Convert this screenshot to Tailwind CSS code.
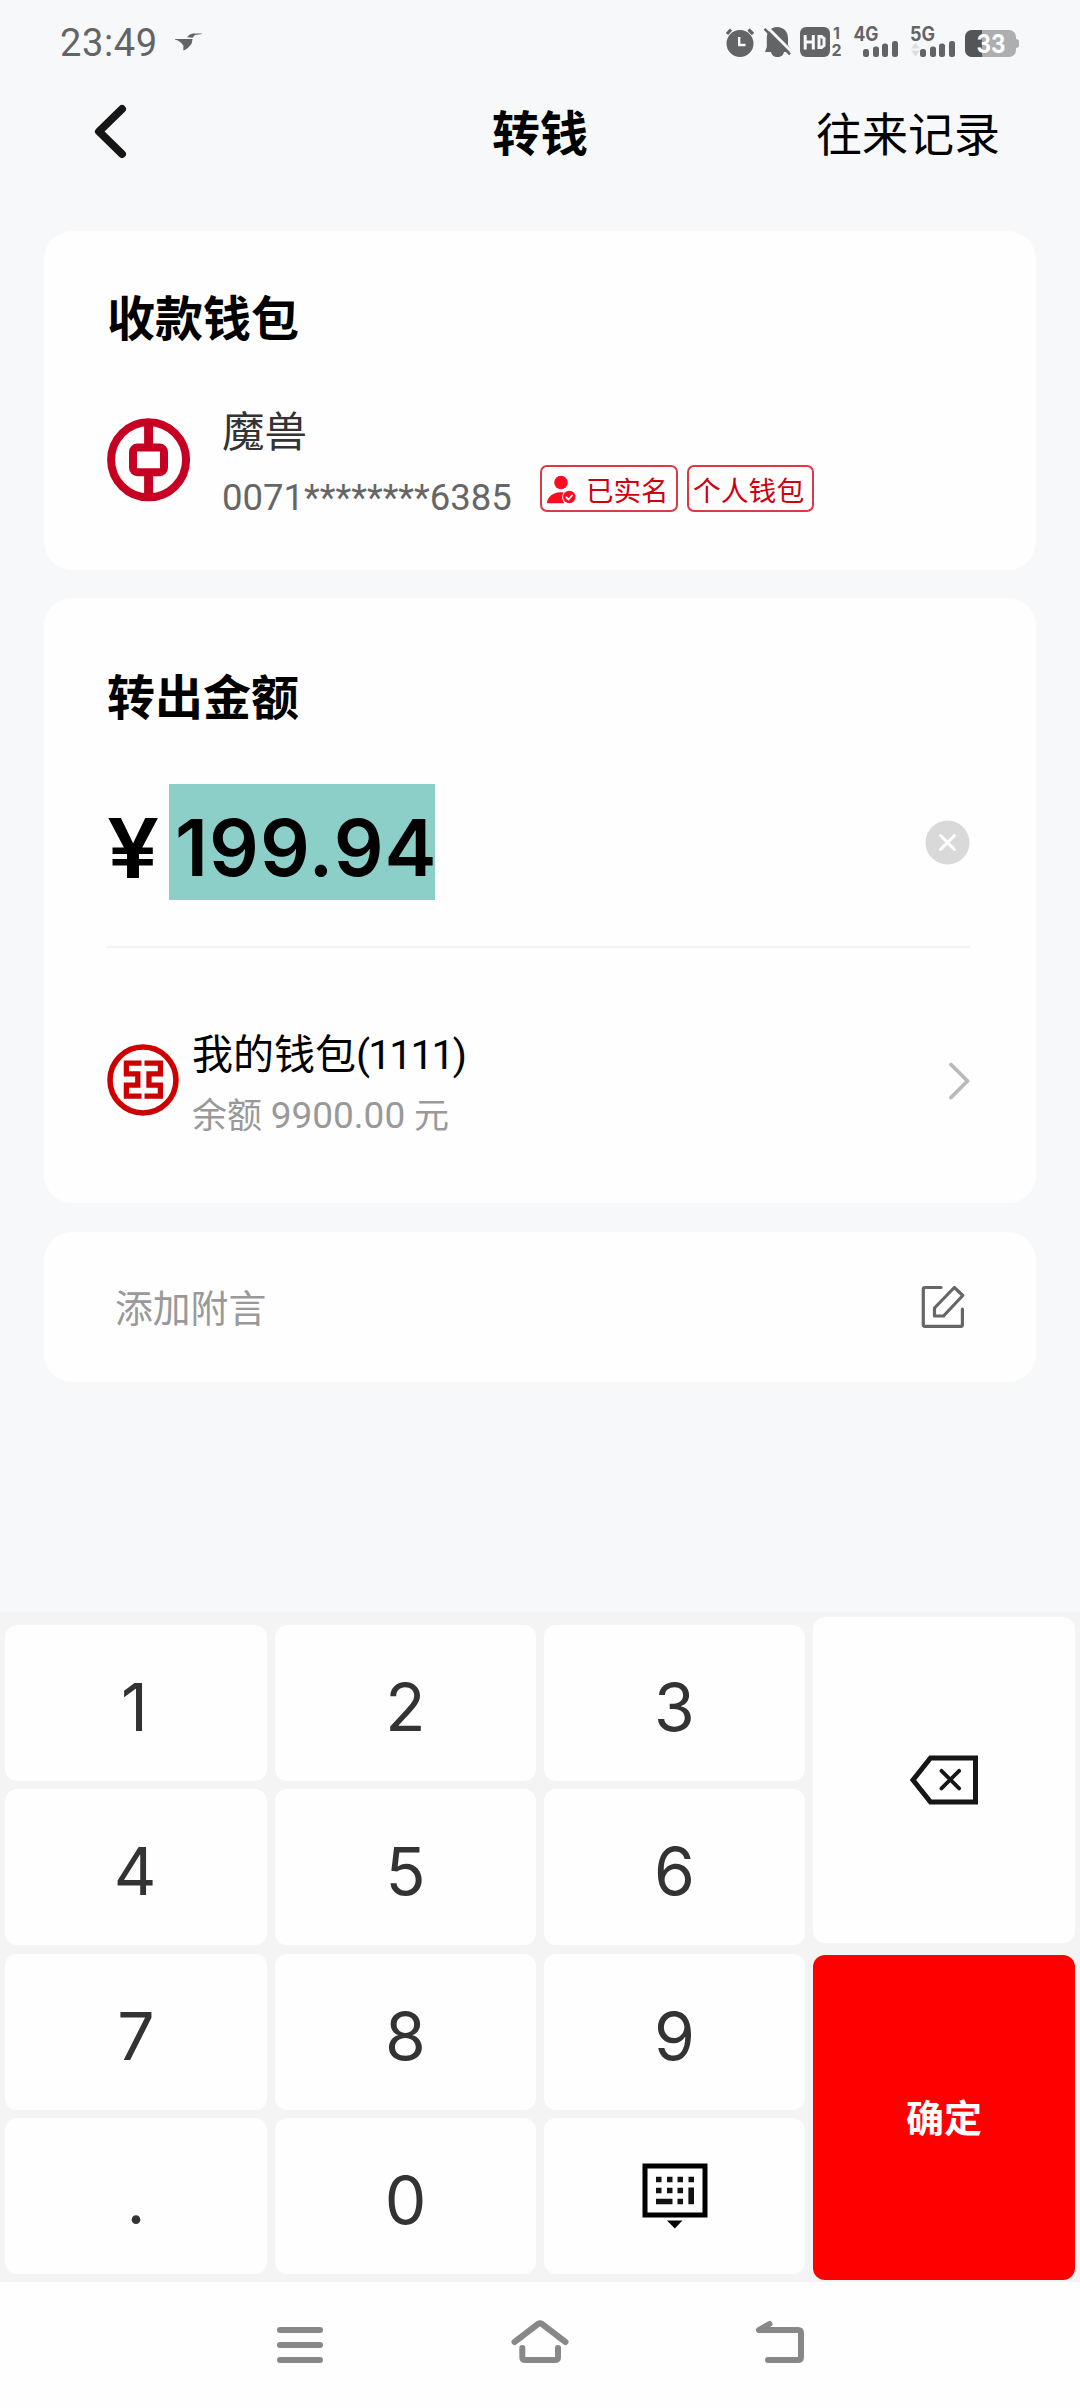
<!DOCTYPE html>
<html lang="zh-CN">
<head>
<meta charset="utf-8">
<title>转钱</title>
<script src="https://cdn.jsdelivr.net/npm/@tailwindcss/browser@4"></script>
</head>
<body class="w-[1080px] h-[2408px] overflow-hidden bg-[#f7f8fa] flex flex-col font-['Roboto','Noto_Sans_CJK_SC',sans-serif] text-black">

  <!-- status bar -->
  <div class="h-[84px] shrink-0 flex items-center justify-between pl-[60px] pr-[60px]">
    <div class="flex items-center gap-[17px]">
      <span class="text-[38px] leading-none tracking-[0.6px] text-[#636465] mt-[2px]">23:49</span>
      <svg class="w-[28px] h-[18px]" viewBox="0 0 28 18" fill="#636465"><path d="M0 6h17.500l-.8 4.500Q13 16 8.500 17.500q-.5-1 0-4.500Q6 8.500 0 6.600ZM12 4.300Q14.500.9 18 .6L27 .4v.7l-7 .9-2.500 2.700Z"/></svg>
    </div>
    <svg class="w-[296px] h-[54px]" viewBox="725 15 296 54" fill="#636465" font-family="Inter, sans-serif" font-weight="700">
      <circle cx="741" cy="43.500" r="13.500"/>
      <path d="M728 34l4-4.500M749.500 29.500l4.500 4.500" stroke="#636465" stroke-width="3.200"/>
      <path d="M740.200 37v8h6.300" stroke="#f7f8fa" stroke-width="2.400" fill="none"/>
      <path d="M778 27c7 0 11 5 11 11v7l4.500 7H785c-.5 3-3 5-6.500 5s-6-2-6.500-5h-6l1.800-5V38c0-6 3.700-11 10.200-11Z"/>
      <path d="M768.500 27.500L794 53" stroke="#f7f8fa" stroke-width="3"/>
      <path d="M765.500 28.800L791 54.300" stroke="#636465" stroke-width="2.400"/>
      <rect x="801" y="27" width="30" height="30" rx="6"/>
      <path d="M806.200 35v14.500M814.300 35v14.500M806.200 42h8.600M820 36.500h2.500l2.500 2v7l-2.500 2H820Z" stroke="#f7f8fa" stroke-width="3" fill="none"/>
      <text x="834" y="38.500" font-size="16">1</text>
      <text x="832.500" y="56" font-size="16">2</text>
      <text x="854.500" y="41.300" font-size="19.500" textLength="25" lengthAdjust="spacingAndGlyphs">4G</text>
      <rect x="864" y="49" width="6" height="8" rx="2.500"/><rect x="874" y="46.500" width="6" height="10.500" rx="2.500"/><rect x="883" y="43.500" width="6" height="13.500" rx="2.500"/><rect x="893" y="41" width="6" height="16" rx="2.500"/>
      <text x="911" y="41.300" font-size="19.500" textLength="25" lengthAdjust="spacingAndGlyphs">5G</text>
      <path d="M912 48.500l4.500-5.500 4.500 5.500ZM912 50.500h9l-4.500 6Z" fill="#dcdddd"/>
      <rect x="921" y="49" width="6" height="8" rx="2.500"/><rect x="931" y="46.500" width="6" height="10.500" rx="2.500"/><rect x="940" y="43.500" width="6" height="13.500" rx="2.500"/><rect x="950" y="41" width="6" height="16" rx="2.500"/>
      <path d="M973 30h37a7 7 0 0 1 7 7v2q3 .5 3 2v5q0 1.500-3 2v2a7 7 0 0 1-7 7H973a7 7 0 0 1-7-7V37a7 7 0 0 1 7-7Z" fill="#adaeaf"/>
      <path d="M983 30H973a7 7 0 0 0-7 7v13a7 7 0 0 0 7 7h10Z" fill="#545556"/>
      <text x="977.500" y="53" font-size="25" fill="#fff" textLength="29" lengthAdjust="spacingAndGlyphs">33</text>
    </svg>
  </div>

  <!-- title bar -->
  <header class="h-[147px] shrink-0 px-[80px] grid grid-cols-3 items-start pt-[15px]">
    <svg class="w-[36px] h-[56px] ml-[12px] mt-[5px]" viewBox="92 104 36 56" fill="none" stroke="#161616" stroke-width="8" stroke-linecap="round" stroke-linejoin="round"><path d="M122 109L99 131.500L122 154"/></svg>
    <h1 class="text-center text-[48px] leading-[66px] mt-[3px] font-bold">转钱</h1>
    <div class="text-right text-[46px] leading-[68px] mt-[2px]">往来记录</div>
  </header>

  <main class="px-[44px] flex flex-col">
    <!-- payee -->
    <section class="h-[339px] rounded-[28px] bg-[#fefefe] pl-[63px] pt-[53px]">
      <h2 class="text-[48px] leading-[72px] font-bold">收款钱包</h2>
      <div class="flex mt-[39px]">
        <svg class="w-[84px] h-[84px] mt-[23px]" viewBox="107 417.500 84 84" fill="none" stroke="#c50022">
          <circle cx="148.600" cy="459.300" r="37.500" stroke-width="8"/>
          <path d="M148.600 420v26M148.600 472v26" stroke-width="9"/>
          <rect x="133" y="447" width="31" height="24.800" rx="4.500" stroke-width="8"/>
        </svg>
        <div class="ml-[31px] flex flex-col">
          <div class="text-[42.5px] leading-[60px] mt-[8px] text-[#333]">魔兽</div>
          <div class="flex items-start">
            <span class="w-[318px] text-[36.5px] leading-[60px] mt-[5px] text-[#666]">0071********6385</span>
            <span class="mt-[2px] h-[47px] w-[138px] rounded-[7px] border-2 border-[#dc3a42] flex items-center pl-[4px] text-[27.5px] leading-none text-[#d0000f]">
              <svg class="w-[30px] h-[30px] mr-[10px]" viewBox="547 473 30 30"><g fill="#ff0a1e"><circle cx="562" cy="481.500" r="6.800"/><path d="M548 502.200c0-6 6-11 13-11h3.500c-1.500 3-2 7 .8 11Z"/><circle cx="570.300" cy="496" r="6.200"/></g><path d="M567 496l2.500 2.500 4-4.500" stroke="#fff" stroke-width="1.800" fill="none"/></svg>
              <span class="mt-[6px]">已实名</span>
            </span>
            <span class="ml-[9px] mt-[2px] h-[47px] w-[127px] rounded-[7px] border-2 border-[#dc3a42] flex items-center pl-[4px] text-[27.8px] leading-none whitespace-nowrap text-[#d0000f]"><span class="mt-[6px]">个人钱包</span></span>
          </div>
        </div>
      </div>
    </section>

    <!-- amount -->
    <section class="mt-[28px] h-[605px] rounded-[28px] bg-[#fefefe] pl-[63px] pr-[66px] pt-[65px]">
      <h2 class="text-[48px] leading-[72px] font-bold">转出金额</h2>
      <div class="mt-[49px] h-[116px] flex items-center font-['Inter',sans-serif] font-semibold">
        <span class="w-[62px] text-[82px] leading-[116px] pt-[14px] origin-left scale-x-[1.13]">¥</span>
        <span class="w-[266px] h-[116px] pl-[6px] bg-[#8bcfc8] text-[78px] leading-[128px] tracking-[1px] whitespace-nowrap">199.94</span>
        <svg class="ml-auto w-[45px] h-[45px]" viewBox="0 0 45 45"><circle cx="22.500" cy="22.500" r="22" fill="#d9d9d9"/><path d="M15.500 15.500l14 14M29.500 15.500l-14 14" stroke="#fff" stroke-width="3" stroke-linecap="round"/></svg>
      </div>
      <div class="mt-[46px] h-[2px] bg-[#f2f2f2]"></div>
      <div class="mt-[72px] flex items-center">
        <svg class="w-[72px] h-[72px]" viewBox="107 1044.500 72 72" fill="none" stroke="#cc0000">
          <circle cx="143" cy="1080.500" r="33" stroke-width="5.600"/>
          <path d="M141.500 1063.700H126.400v10.700h11.400v11.200h-11.400v11H141.500M144.500 1063.700H160.400v10.700H149v11.200h11.400v11H144.500" stroke-width="5.300"/>
        </svg>
        <div class="ml-[13px] flex flex-col pt-[10px] -mb-[10px]">
          <div class="text-[41px] leading-[60px] h-[60px] -mt-[10px] pt-[5px]">我的钱包<span class="tracking-[-1.9px]">(1111)</span></div>
          <div class="text-[35px] leading-[60px] h-[70px] pt-[6px] text-[#999]">余额 <span class="text-[37px]">9900.00</span> 元</div>
        </div>
        <svg class="ml-auto w-[24px] h-[42px] mt-[2px]" viewBox="946 1060 24 42" fill="none" stroke="#b9b9b9" stroke-width="3.800" stroke-linecap="round" stroke-linejoin="round"><path d="M951 1064.500L967.500 1081L951 1097.500"/></svg>
      </div>
    </section>

    <!-- remark -->
    <section class="mt-[29px] h-[150px] rounded-[28px] bg-[#fefefe] pl-[71px] pr-[70px] flex items-center justify-between">
      <span class="text-[37.8px] leading-none pt-[5px] text-[#999]">添加附言</span>
      <svg class="w-[46px] h-[46px]" viewBox="920 1284 46 46" fill="none" stroke="#666" stroke-width="3.200" stroke-linecap="round" stroke-linejoin="round"><path d="M941 1287.500H925q-1.700 0-1.700 1.700v35.500q0 1.700 1.700 1.700h35.700q1.700 0 1.700-1.700V1309M954.300 1287.500l8.500 8-19.300 20.500h-9v-8Z"/></svg>
    </section>
  </main>

  <!-- keypad -->
  <div class="mt-auto h-[670px] shrink-0 bg-[#f4f4f4] flex gap-[8px] pl-[5px] pr-[5px]">
    <div class="pt-[13px] grid grid-cols-[262px_261px_261px] auto-rows-[156px] gap-x-[8px] gap-y-[8.3px] text-[66px] leading-[156px] text-center text-[#333] font-['Inter','Roboto',sans-serif]">
      <div class="rounded-[12px] bg-[#fefefe] pt-1 pr-[3px]">1</div>
      <div class="rounded-[12px] bg-[#fefefe] pt-1">2</div>
      <div class="rounded-[12px] bg-[#fefefe] pt-1">3</div>
      <div class="rounded-[12px] bg-[#fefefe] pt-1 pr-[2px]">4</div>
      <div class="rounded-[12px] bg-[#fefefe] pt-1">5</div>
      <div class="rounded-[12px] bg-[#fefefe] pt-1">6</div>
      <div class="rounded-[12px] bg-[#fefefe] pt-1">7</div>
      <div class="rounded-[12px] bg-[#fefefe] pt-1">8</div>
      <div class="rounded-[12px] bg-[#fefefe] pt-1">9</div>
      <div class="rounded-[12px] bg-[#fefefe] pt-1">.</div>
      <div class="rounded-[12px] bg-[#fefefe] pt-1">0</div>
      <div class="rounded-[12px] bg-[#fefefe] flex items-center justify-center">
        <svg class="w-[66px] h-[66px]" viewBox="641.500 2163.500 66 66"><rect x="644.500" y="2166.500" width="60" height="49" fill="none" stroke="#000" stroke-width="5"/><path d="M666.500 2221h15.500l-7.700 8Z"/><path d="M655.500 2180h5.500m5.500 0h5.500m5 0h5.500m5.500 0h5.500M655.500 2191h5.500m5.500 0h5.500m5 0h5.500M655.500 2202h16.500m5 0h5.500M690.700 2188v16.700" stroke="#111" stroke-width="5.600" fill="none"/></svg>
      </div>
    </div>
    <div class="w-[262px] pt-[5px] flex flex-col gap-[12px]">
      <div class="h-[326px] rounded-[12px] bg-[#fefefe] flex items-center justify-center">
        <svg class="w-[70px] h-[50px]" viewBox="908 1755.500 70 50" fill="none" stroke="#161616"><path d="M929.500 1758.500H974.500v44H929.500L912 1780.500Z" stroke-width="5"/><path d="M940.500 1771.300l17.600 17.600M958.100 1771.300l-17.600 17.600" stroke-width="3.800" stroke-linecap="round"/></svg>
      </div>
      <div class="h-[325px] rounded-[12px] bg-[#ff0000] text-white text-[38px] font-bold flex items-center justify-center pt-[4px]">确定</div>
    </div>
  </div>

  <!-- system navigation -->
  <nav class="h-[126px] shrink-0 bg-[#fefefe] flex justify-center gap-[180px] pt-[32px]">
    <svg class="w-[60px] h-[60px]" viewBox="270 2314 60 60" stroke="#888" stroke-width="6" stroke-linecap="round" fill="none"><path d="M280 2330h40M280 2345h40M280 2360h40"/></svg>
    <svg class="w-[60px] h-[60px]" viewBox="510 2314 60 60" stroke="#888" stroke-width="6" stroke-linecap="round" stroke-linejoin="round" fill="none"><path d="M514.500 2342L538 2324q2-1.500 4 0L565.500 2342M522.300 2348v9q0 3 3 3h29.700q3 0 3-3v-9"/></svg>
    <svg class="w-[60px] h-[60px]" viewBox="750 2314 60 60" stroke="#888" stroke-width="6" stroke-linecap="round" stroke-linejoin="round" fill="none"><path d="M769.500 2324L759 2330H798q3 0 3 3v24q0 3-3 3H768"/></svg>
  </nav>
</body>
</html>
